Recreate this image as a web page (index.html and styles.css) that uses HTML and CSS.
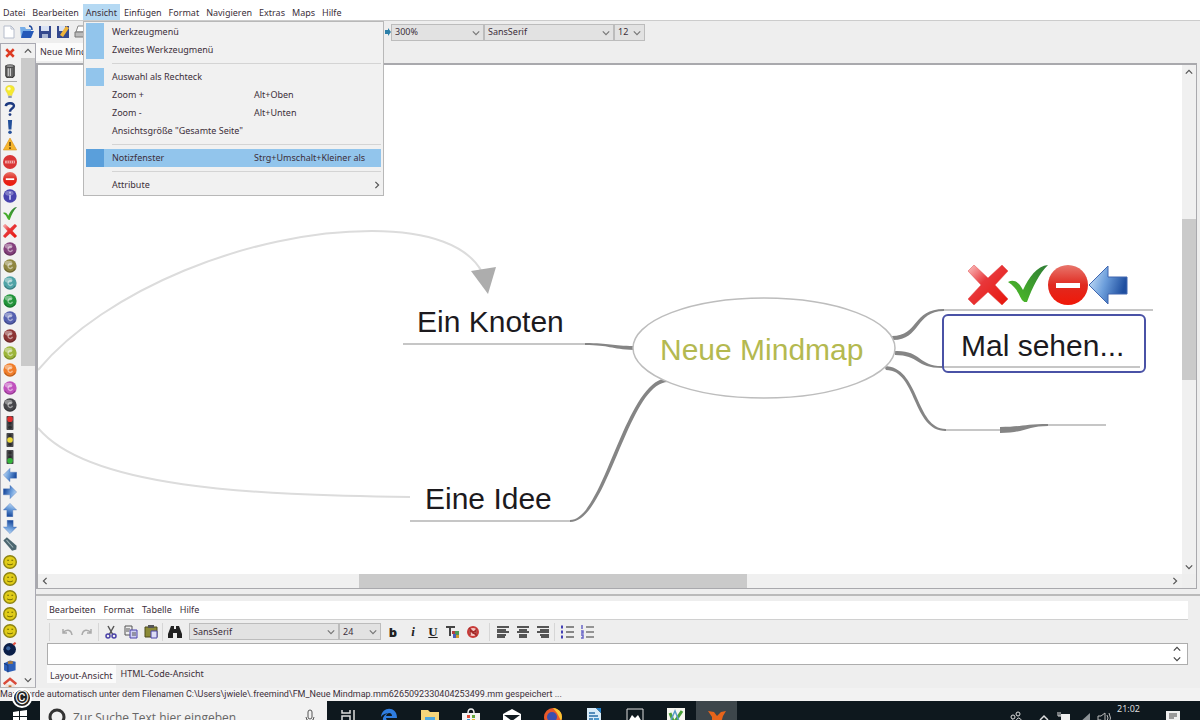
FILE: index.html
```html
<!DOCTYPE html>
<html lang="de">
<head>
    <meta charset="UTF-8">
    <meta name="viewport" content="width=device-width, initial-scale=1.0">
    <title>FreeMind - Neue Mindmap</title>
    <link rel="stylesheet" href="styles.css">
</head>
<body>
    <!-- shared icon symbols -->
    <svg class="sprite" width="0" height="0" aria-hidden="true">
        <defs>
            <linearGradient id="redFade" x1="0" y1="0" x2="1" y2="1">
                <stop offset="0" stop-color="#fbc4c4"/>
                <stop offset="0.4" stop-color="#e8373a"/>
                <stop offset="1" stop-color="#e8150a"/>
            </linearGradient>
            <linearGradient id="redBall" x1="0" y1="0" x2="0" y2="1">
                <stop offset="0" stop-color="#e8766c"/>
                <stop offset="0.5" stop-color="#e02a20"/>
                <stop offset="1" stop-color="#f01808"/>
            </linearGradient>
            <linearGradient id="greenFade" x1="1" y1="0" x2="0" y2="1">
                <stop offset="0" stop-color="#2f7d36"/>
                <stop offset="1" stop-color="#4fc026"/>
            </linearGradient>
            <linearGradient id="blueFade" x1="0" y1="0" x2="1" y2="0.3">
                <stop offset="0" stop-color="#d3e8fa"/>
                <stop offset="0.5" stop-color="#6d9fdc"/>
                <stop offset="1" stop-color="#1f4fa0"/>
            </linearGradient>
            <symbol id="cross" viewBox="0 0 40 40">
                <path d="M6 0 20 13 34 0 40 6 27 20 40 34 34 40 20 27 6 40 0 34 13 20 0 6Z" fill="url(#redFade)" stroke="#e04848" stroke-width="0.5"/>
            </symbol>
            <symbol id="cross-plain" viewBox="0 0 40 40">
                <path d="M5 5 35 35M35 5 5 35" stroke="#dd3a22" stroke-width="10"/>
            </symbol>
            <symbol id="check" viewBox="0 0 40 40">
                <path d="M0 17C6 14 11 17 15 25C21 12 29 1 40 0C31 9 25 21 19 37C11 38 14 26 0 17Z" fill="url(#greenFade)"/>
            </symbol>
            <symbol id="noentry" viewBox="0 0 40 40">
                <circle cx="20" cy="20" r="20" fill="url(#redBall)"/>
                <rect x="8" y="18" width="24" height="5" fill="#fff"/>
            </symbol>
            <symbol id="arrow" viewBox="0 0 40 40">
                <path d="M1 20 20 1V12H39V29H20V39Z" fill="url(#blueFade)" stroke="#4067b0"/>
            </symbol>
            <symbol id="stop" viewBox="0 0 40 40">
                <circle cx="20" cy="20" r="20" fill="#d93535"/>
                <path d="M6 16h28v8H6z" fill="#f3b2b2"/>
                <path d="M12 16v8M18 16v8M24 16v8M30 16v8" stroke="#d93535" stroke-width="2"/>
            </symbol>
            <symbol id="ball" viewBox="0 0 40 40">
                <circle cx="20" cy="20" r="19" fill="currentColor"/>
                <ellipse cx="16" cy="12" rx="11" ry="7" fill="#fff" opacity="0.4"/>
                <path d="M25 15C18 11 13 17 15 23C18 29 25 28 27 22" fill="none" stroke="#fff" stroke-width="4" opacity="0.5"/>
                <path d="M5 28C12 40 28 40 35 28" fill="none" stroke="#000" stroke-width="3" opacity="0.25"/>
            </symbol>
            <symbol id="info" viewBox="0 0 40 40">
                <circle cx="20" cy="20" r="19" fill="#4843ae"/>
                <ellipse cx="18" cy="12" rx="12" ry="7" fill="#fff" opacity="0.3"/>
                <path d="M20 8v5M20 17v14" stroke="#c5c5f4" stroke-width="5"/>
            </symbol>
            <symbol id="smile" viewBox="0 0 40 40">
                <circle cx="20" cy="20" r="18" fill="#e0cc18" stroke="#8e8412" stroke-width="4"/>
                <path d="M12 15h5M24 15h5M12 25C16 29 24 29 28 25" fill="none" stroke="#6e6500" stroke-width="3"/>
            </symbol>
            <symbol id="bulb" viewBox="0 0 40 40">
                <path d="M20 1C8 1 4 12 10 20C13 24 14 26 14 30H26C26 26 27 24 30 20C36 12 32 1 20 1Z" fill="#f5e930" stroke="#d8c840"/>
                <circle cx="17" cy="11" r="5" fill="#fffbd0"/>
                <path d="M15 31h10v6H15z" fill="#8e98b0"/>
            </symbol>
            <symbol id="question" viewBox="0 0 40 40">
                <path d="M8 12C9 0 33 1 31 12C30 20 20 18 20 28" fill="none" stroke="#1d3a80" stroke-width="7"/>
                <circle cx="20" cy="36" r="4" fill="#1d3a80"/>
            </symbol>
            <symbol id="exclaim" viewBox="0 0 40 40">
                <path d="M14 0h12l-2 27h-8z" fill="#24509a"/>
                <circle cx="20" cy="35" r="5" fill="#24509a"/>
            </symbol>
            <symbol id="warning" viewBox="0 0 40 40">
                <path d="M20 3 39 37H1Z" fill="#f6b52c" stroke="#e09a22" stroke-width="2"/>
                <path d="M20 14v12M20 29v5" stroke="#705010" stroke-width="5"/>
            </symbol>
            <symbol id="trash" viewBox="0 0 40 40">
                <path d="M8 6h24v28l-5 5H12l-4-5z" fill="#666" stroke="#333" stroke-width="3"/>
                <path d="M15 12v22M21 12v22" stroke="#ddd" stroke-width="3"/>
                <ellipse cx="20" cy="6" rx="12" ry="4" fill="#999" stroke="#333" stroke-width="2"/>
            </symbol>
            <symbol id="light" viewBox="0 0 40 40">
                <rect x="10" y="0" width="20" height="40" rx="2" fill="#48484c"/>
                <circle cx="20" cy="8" r="5" fill="#2c2c2e"/>
                <circle cx="20" cy="20" r="5" fill="#2c2c2e"/>
                <circle cx="20" cy="32" r="5" fill="#2c2c2e"/>
            </symbol>
            <symbol id="pen" viewBox="0 0 40 40">
                <path d="M1 10 11 1 39 25 38 36 26 39Z" fill="#4c6670"/>
                <path d="M10 9 29 30" stroke="#9fb4b8" stroke-width="3"/>
            </symbol>
            <symbol id="bomb" viewBox="0 0 40 40">
                <circle cx="19" cy="21" r="18" fill="#0b1f48"/>
                <circle cx="15" cy="18" r="6" fill="#37619c"/>
                <path d="M29 8 36 2" stroke="#e25040" stroke-width="6"/>
            </symbol>
            <symbol id="folder" viewBox="0 0 40 40">
                <path d="M3 12 20 4 36 8V32L14 38 3 32Z" fill="#2d5fb8"/>
                <path d="M14 6h14v8H14z" fill="#a8793e"/>
                <path d="M3 12 14 18V38" fill="none" stroke="#193b7d" stroke-width="3"/>
            </symbol>
            <symbol id="house" viewBox="0 0 40 40">
                <path d="M7 20v18h26V20" fill="#f3e2d8"/>
                <path d="M2 20 20 5 38 20" fill="none" stroke="#d94b3a" stroke-width="7"/>
                <path d="M16 24h8v14h-8z" fill="#c06c30"/>
            </symbol>
            <symbol id="chevron" viewBox="0 0 10 10">
                <path d="M1 3 5 7 9 3" fill="none" stroke="currentColor" stroke-width="1.5"/>
            </symbol>
        </defs>
    </svg>

    <nav class="menubar">
        <button>Datei</button>
        <button>Bearbeiten</button>
        <button class="open">Ansicht</button>
        <button>Einfügen</button>
        <button>Format</button>
        <button>Navigieren</button>
        <button>Extras</button>
        <button>Maps</button>
        <button>Hilfe</button>

        <div class="dropdown">
            <button class="item checked">Werkzeugmenü</button>
            <button class="item checked">Zweites Werkzeugmenü</button>
            <hr>
            <button class="item checked">Auswahl als Rechteck</button>
            <button class="item">Zoom +<span class="shortcut">Alt+Oben</span></button>
            <button class="item">Zoom -<span class="shortcut">Alt+Unten</span></button>
            <button class="item">Ansichtsgröße "Gesamte Seite"</button>
            <hr>
            <button class="item checked active">Notizfenster<span class="shortcut">Strg+Umschalt+Kleiner als</span></button>
            <hr>
            <button class="item">Attribute<svg class="submenu" width="8" height="8"><use href="#chevron"/></svg></button>
        </div>
    </nav>

    <div class="toolbar">
        <div class="tools">
            <button aria-label="Neu"><svg viewBox="0 0 14 14"><path d="M2 1h7l3 3v9H2z" fill="#fff" stroke="#b5bccb"/><path d="M9 1v3h3" fill="none" stroke="#b5bccb"/></svg></button>
            <button aria-label="Öffnen"><svg viewBox="0 0 14 14"><path d="M0 2h5l1 2h5v8H1z" fill="#77aee8"/><path d="M3 6h11l-3 7H1z" fill="#2559b8"/><path d="M9 1q3 0 3 4" fill="none" stroke="#1d479b" stroke-width="1.5"/></svg></button>
            <button aria-label="Speichern"><svg viewBox="0 0 14 14"><path d="M1 1h12v12H1z" fill="#34498e"/><path d="M3 1h8v5H3z" fill="#d9e2f4"/><path d="M4 9h6v4H4z" fill="#a9b6d4"/></svg></button>
            <button aria-label="Speichern unter"><svg viewBox="0 0 14 14"><path d="M1 1h12v12H1z" fill="#34498e"/><path d="M3 1h6v5H3z" fill="#d9e2f4"/><path d="M4 10 10 1l3 2-6 9z" fill="#efb43a"/></svg></button>
            <button aria-label="Drucken"><svg viewBox="0 0 14 14"><path d="M4 1h8L9 7H2z" fill="#fff" stroke="#888"/><path d="M1 7h12v5H1z" fill="#bbb" stroke="#777"/></svg></button>
        </div>
        <svg class="next" width="6" height="8" viewBox="0 0 6 8"><path d="M0 2h3V0l3 4-3 4V6H0z" fill="#2c7fa8"/></svg>
        <label class="combo zoom"><select aria-label="Zoom"><option>300%</option></select><svg><use href="#chevron"/></svg></label>
        <label class="combo font"><select aria-label="Schriftart"><option>SansSerif</option></select><svg><use href="#chevron"/></svg></label>
        <label class="combo size"><select aria-label="Schriftgröße"><option>12</option></select><svg><use href="#chevron"/></svg></label>
    </div>

    <div class="workspace">
        <aside class="iconbar">
            <div class="icons">
                <button aria-label="Icon entfernen"><svg class="small"><use href="#cross-plain"/></svg></button>
                <button aria-label="Alle entfernen"><svg><use href="#trash"/></svg></button>
                <hr>
                <div class="icon-list">
                    <button aria-label="Idee"><svg><use href="#bulb"/></svg></button>
                    <button aria-label="Frage"><svg><use href="#question"/></svg></button>
                    <button aria-label="Wichtig"><svg><use href="#exclaim"/></svg></button>
                    <button aria-label="Warnung"><svg><use href="#warning"/></svg></button>
                    <button aria-label="Stop"><svg><use href="#stop"/></svg></button>
                    <button aria-label="Verboten"><svg><use href="#noentry"/></svg></button>
                    <button aria-label="Info"><svg><use href="#info"/></svg></button>
                    <button aria-label="OK"><svg><use href="#check"/></svg></button>
                    <button aria-label="Nicht OK"><svg><use href="#cross"/></svg></button>
                    <button aria-label="Priorität 1" class="purple"><svg><use href="#ball"/></svg></button>
                    <button aria-label="Priorität 2" class="olive"><svg><use href="#ball"/></svg></button>
                    <button aria-label="Priorität 3" class="teal"><svg><use href="#ball"/></svg></button>
                    <button aria-label="Priorität 4" class="green"><svg><use href="#ball"/></svg></button>
                    <button aria-label="Priorität 5" class="blue"><svg><use href="#ball"/></svg></button>
                    <button aria-label="Priorität 6" class="brown"><svg><use href="#ball"/></svg></button>
                    <button aria-label="Priorität 7" class="lime"><svg><use href="#ball"/></svg></button>
                    <button aria-label="Priorität 8" class="orange"><svg><use href="#ball"/></svg></button>
                    <button aria-label="Priorität 9" class="pink"><svg><use href="#ball"/></svg></button>
                    <button aria-label="Priorität 0" class="dark"><svg><use href="#ball"/></svg></button>
                    <button aria-label="Ampel rot"><svg viewBox="0 0 40 40"><use href="#light"/><circle cx="20" cy="9" r="8" fill="#e33030"/></svg></button>
                    <button aria-label="Ampel gelb"><svg viewBox="0 0 40 40"><use href="#light"/><circle cx="20" cy="20" r="8" fill="#ecd83a"/></svg></button>
                    <button aria-label="Ampel grün"><svg viewBox="0 0 40 40"><use href="#light"/><circle cx="20" cy="31" r="8" fill="#35b43c"/></svg></button>
                    <button aria-label="Zurück"><svg><use href="#arrow"/></svg></button>
                    <button aria-label="Vor"><svg class="turn-right"><use href="#arrow"/></svg></button>
                    <button aria-label="Hoch"><svg class="turn-up"><use href="#arrow"/></svg></button>
                    <button aria-label="Runter"><svg class="turn-down"><use href="#arrow"/></svg></button>
                    <button aria-label="Stift"><svg><use href="#pen"/></svg></button>
                    <button aria-label="Smiley 1"><svg><use href="#smile"/></svg></button>
                    <button aria-label="Smiley 2"><svg><use href="#smile"/></svg></button>
                    <button aria-label="Smiley 3"><svg><use href="#smile"/></svg></button>
                    <button aria-label="Smiley 4"><svg><use href="#smile"/></svg></button>
                    <button aria-label="Smiley 5"><svg><use href="#smile"/></svg></button>
                    <button aria-label="Bombe"><svg><use href="#bomb"/></svg></button>
                    <button aria-label="Ordner"><svg><use href="#folder"/></svg></button>
                    <button aria-label="Haus"><svg><use href="#house"/></svg></button>
                </div>
            </div>
            <div class="scroll vertical side-scroll">
                <svg class="turn-up-chevron"><use href="#chevron"/></svg>
                <div class="thumb"></div>
                <div class="rest"></div>
                <svg><use href="#chevron"/></svg>
            </div>
        </aside>

        <div class="content">
            <div class="maptabs"><button>Neue Mindmap</button></div>

            <main class="mapframe">
                <div class="map">
                    <svg class="edges" width="1144" height="508" viewBox="38 65 1144 508">
                        <g fill="none" stroke="#dcdcdc" stroke-width="2">
                            <path d="M410 497C250 495 88 488 38 428"/>
                            <path d="M38 370C105 290 250 231 372 231C430 231 468 246 482 272"/>
                        </g>
                        <path d="M471 271 496 267 488 294Z" fill="#adadad"/>
                        <g fill="none" stroke="#c6c6c6" stroke-width="2">
                            <path d="M403 344H585M410 521H570M944 310H1153M942 367H1140M944 430H1000M1046 425H1106"/>
                        </g>
                        <g fill="#858585">
                            <path d="M585 343C610 343 612 346 634 346V350C610 349 610 345 585 345Z"/>
                            <path d="M570 520C604 520 625 379 668 378V382C628 383 608 522 570 522Z"/>
                            <path d="M892 336C919 336 912 309 944 309V311C915 311 921 340 893 340Z"/>
                            <path d="M895 351C921 350 918 366 942 366V368C916 368 919 355 895 355Z"/>
                            <path d="M884 366C920 366 915 429 946 429V431C912 431 917 370 886 370Z"/>
                            <path d="M1000 427C1021 427 1024 424 1048 424V426C1028 426 1024 433 1000 433Z"/>
                        </g>
                        <ellipse cx="764" cy="348" rx="131" ry="50" fill="#fff" stroke="#bdbdbd" stroke-width="1.5"/>
                    </svg>
                    <div class="node knoten">Ein Knoten</div>
                    <div class="node idee">Eine Idee</div>
                    <div class="node root">Neue Mindmap</div>
                    <div class="node marks">
                        <svg><use href="#cross"/></svg>
                        <svg><use href="#check"/></svg>
                        <svg><use href="#noentry"/></svg>
                        <svg><use href="#arrow"/></svg>
                    </div>
                    <div class="node selected">Mal sehen...</div>
                </div>
                <div class="scroll vertical map-v">
                    <svg class="turn-up-chevron"><use href="#chevron"/></svg>
                    <div class="before"></div>
                    <div class="thumb"></div>
                    <div class="rest"></div>
                    <svg><use href="#chevron"/></svg>
                </div>
                <div class="scroll horizontal map-h">
                    <svg class="turn-left-chevron"><use href="#chevron"/></svg>
                    <div class="before"></div>
                    <div class="thumb"></div>
                    <div class="rest"></div>
                    <svg class="turn-right-chevron"><use href="#chevron"/></svg>
                </div>
            </main>

            <section class="notes">
                <div class="notes-menu">
                    <button>Bearbeiten</button>
                    <button>Format</button>
                    <button>Tabelle</button>
                    <button>Hilfe</button>
                </div>
                <div class="notes-tools">
                    <div class="group first">
                        <button aria-label="Rückgängig"><svg viewBox="0 0 14 14"><path d="M3 4v4h4M3 8C6 4 11 4 12 10" fill="none" stroke="#aaa" stroke-width="1.5"/></svg></button>
                        <button aria-label="Wiederholen"><svg viewBox="0 0 14 14"><path d="M11 4v4H7M11 8C8 4 3 4 2 10" fill="none" stroke="#aaa" stroke-width="1.5"/></svg></button>
                    </div>
                    <div class="group">
                        <button aria-label="Ausschneiden"><svg viewBox="0 0 14 14"><path d="M4 1 9 10M10 1 5 10" stroke="#555" stroke-width="1.5"/><circle cx="4" cy="11" r="2" fill="none" stroke="#4a42a8" stroke-width="1.5"/><circle cx="10" cy="11" r="2" fill="none" stroke="#4a42a8" stroke-width="1.5"/></svg></button>
                        <button aria-label="Kopieren"><svg viewBox="0 0 14 14"><path d="M1 1h7v9H1z" fill="#eee" stroke="#555"/><path d="M6 5h7v8H6z" fill="#cfcff2" stroke="#4a42a8"/><path d="M2 4h4M2 6h3M8 8h4M8 10h4" stroke="#555"/></svg></button>
                        <button aria-label="Einfügen"><svg viewBox="0 0 14 14"><path d="M1 2h12v10H1z" fill="#8b8a35" stroke="#4c4b1c"/><path d="M4 0h6v3H4z" fill="#555"/><path d="M7 6h6v7H7z" fill="#dcdcf5" stroke="#4a42a8"/></svg></button>
                    </div>
                    <div class="group last">
                        <button aria-label="Suchen"><svg viewBox="0 0 14 14"><path d="M3 1h3v3h2V1h3l3 8v4H9V8H5v5H0V9z" fill="#222"/></svg></button>
                    </div>
                    <label class="combo note-font"><select aria-label="Notiz-Schriftart"><option>SansSerif</option></select><svg><use href="#chevron"/></svg></label>
                    <label class="combo note-size"><select aria-label="Notiz-Schriftgröße"><option>24</option></select><svg><use href="#chevron"/></svg></label>
                    <div class="group format">
                        <button class="bold">b</button>
                        <button class="italic">i</button>
                        <button class="underline">U</button>
                        <button aria-label="Textfarbe"><svg viewBox="0 0 14 14"><path d="M0 2h9M4 2v9" stroke="#444" stroke-width="2"/><path d="M6 6h3v3H6z" fill="#b34040"/><path d="M9 6h4v4H9z" fill="#4b9a58"/><path d="M7 9h3v4H7z" fill="#4a5db8"/><path d="M10 10h3v3h-3z" fill="#d39a2c"/></svg></button>
                        <button aria-label="Format löschen"><svg viewBox="0 0 14 14"><circle cx="7" cy="7" r="5" fill="#f3c6c3" stroke="#c93a38" stroke-width="2"/><path d="M4 10V5l3 3 3-3v5M3 3l8 8" fill="none" stroke="#a52a28" stroke-width="1.5"/></svg></button>
                    </div>
                    <div class="group align">
                        <button aria-label="Linksbündig"><svg viewBox="0 0 14 14"><path d="M1 2h12M1 5h9M1 7h12M1 10h9M1 12h8" stroke="#555" stroke-width="2"/></svg></button>
                        <button aria-label="Zentriert"><svg viewBox="0 0 14 14"><path d="M1 2h12M3 5h8M1 7h12M3 10h8M3 12h8" stroke="#555" stroke-width="2"/></svg></button>
                        <button aria-label="Rechtsbündig"><svg viewBox="0 0 14 14"><path d="M1 2h12M4 5h9M1 7h12M4 10h9M5 12h8" stroke="#555" stroke-width="2"/></svg></button>
                    </div>
                    <div class="group last">
                        <button aria-label="Liste"><svg viewBox="0 0 14 14"><path d="M1 2h2M1 7h2M1 12h2" stroke="#4440b5" stroke-width="3"/><path d="M6 2h8M6 7h8M6 12h8" stroke="#666" stroke-width="1.5"/></svg></button>
                        <button aria-label="Nummerierte Liste"><svg viewBox="0 0 14 14"><path d="M2 0v4M1 6h2v2H1M1 10h2v3H1" fill="none" stroke="#6a66c8" stroke-width="1.5"/><path d="M6 2h8M6 7h8M6 12h8" stroke="#777" stroke-width="1.5"/></svg></button>
                    </div>
                </div>
                <div class="editor">
                    <textarea aria-label="Notiz"></textarea>
                    <div class="spin">
                        <svg class="turn-up-chevron"><use href="#chevron"/></svg>
                        <svg><use href="#chevron"/></svg>
                    </div>
                </div>
                <div class="notes-tabs">
                    <button class="current">Layout-Ansicht</button>
                    <button>HTML-Code-Ansicht</button>
                </div>
            </section>
        </div>
    </div>

    <div class="status">Map wurde automatisch unter dem Filenamen C:\Users\jwiele\.freemind\FM_Neue Mindmap.mm6265092330404253499.mm gespeichert ...
        <span class="copyright">©</span>
    </div>

    <footer class="taskbar">
        <button class="start" aria-label="Start"><svg width="14" height="14" viewBox="0 0 14 14"><path d="M0 2 6 1v5H0zM7 1l7-1v6H7zM0 7h6v6l-6-1zM7 7h7v7l-7-1z" fill="#fff"/></svg></button>
        <label class="search">
            <svg width="18" height="18" viewBox="0 0 18 18"><circle cx="9" cy="9" r="7" fill="none" stroke="#333" stroke-width="3"/></svg>
            <input type="text" placeholder="Zur Suche Text hier eingeben">
            <svg width="10" height="16" viewBox="0 0 10 16"><rect x="3" y="1" width="4" height="9" rx="2" fill="none" stroke="#555"/><path d="M1 8q0 4 4 4t4-4M5 12v3" fill="none" stroke="#555"/></svg>
        </label>
        <div class="apps">
            <button aria-label="Taskansicht"><svg viewBox="0 0 18 18"><path d="M3 2v3h8V2M3 8h8v6H3zM15 2v13" fill="none" stroke="#ddd" stroke-width="1.5"/></svg></button>
            <button aria-label="Edge"><svg viewBox="0 0 18 18"><path d="M1 9C2 -2 17 -2 17 10H6C7 15 12 15 16 13V16C8 20 2 16 3 10C4 7 7 5 9 5C6 5 3 6 1 9ZM6 8H12C12 4 7 4 6 8Z" fill="#2f7de0"/></svg></button>
            <button aria-label="Explorer"><svg viewBox="0 0 18 18"><path d="M0 2h7l2 2h9v13H0z" fill="#f6d67a"/><path d="M4 9h10v8H4z" fill="#4fa9e0"/></svg></button>
            <button aria-label="Store"><svg viewBox="0 0 18 18"><path d="M6 5q0-4 3-4t3 4" fill="none" stroke="#eee" stroke-width="1.5"/><path d="M0 5h18v12H0z" fill="#f4f4f4"/><path d="M5 7h3v3H5z" fill="#e04a35"/><path d="M10 7h3v3h-3z" fill="#62a83a"/><path d="M5 11h3v3H5z" fill="#3b92d8"/><path d="M10 11h3v3h-3z" fill="#e8b52e"/></svg></button>
            <button aria-label="Mail"><svg viewBox="0 0 18 18"><path d="M0 6 9 1l9 5v11H0z" fill="#fff"/><path d="M1 7h16l-8 6z" fill="#121c22"/></svg></button>
            <button aria-label="Firefox"><svg viewBox="0 0 18 18"><circle cx="9" cy="9" r="9" fill="#e8592a"/><path d="M9 0a9 9 0 0 1 8 13Q14 5 9 0" fill="#f8c532"/><circle cx="8" cy="9" r="5" fill="#3a4fae"/></svg></button>
            <button aria-label="Writer"><svg viewBox="0 0 18 18"><path d="M2 0h9l5 5v13H2z" fill="#d9ebf8"/><path d="M11 0h5v5z" fill="#2580c8"/><path d="M4 5h6M4 8h9M4 11h4" stroke="#2a6fa8" stroke-width="1.5"/><path d="M9 10h5v4H9z" fill="#4c98cf"/></svg></button>
            <button aria-label="Fotos"><svg viewBox="0 0 18 18"><path d="M1 1h16v16H1z" fill="none" stroke="#ddd"/><path d="M2 14 6 7l3 3 3-3 4 7z" fill="#fff"/></svg></button>
            <button aria-label="Notizen"><svg viewBox="0 0 18 18"><path d="M0 0h18v18H0z" fill="#f6f6f0"/><path d="M3 5 7 15 15 3" fill="none" stroke="#4aa03a" stroke-width="3"/><path d="M4 12 8 3l4 10" fill="none" stroke="#5a9ac8" stroke-width="1.5"/></svg></button>
            <button aria-label="FreeMind" class="running"><svg viewBox="0 0 18 18"><path d="M0 3 6 4 9 8 13 4 18 3 15 8 13 15 9 12 4 15 4 9Z" fill="#e8641a"/></svg></button>
        </div>
        <div class="tray">
            <svg class="people" viewBox="0 0 14 14"><circle cx="9" cy="4" r="2" fill="none" stroke="#ddd"/><circle cx="4" cy="7" r="2" fill="none" stroke="#ddd"/><path d="M6 13q3-9 7-2M1 13q2-6 5 0" fill="none" stroke="#ddd"/></svg>
            <svg viewBox="0 0 14 14"><path d="M3 10 7 6l4 4" fill="none" stroke="#ddd" stroke-width="1.5"/></svg>
            <svg viewBox="0 0 14 14"><path d="M4 4h9v7H4z" fill="#eee"/><path d="M1 2v4h4M3 2v4" fill="none" stroke="#ddd"/></svg>
            <svg viewBox="0 0 14 14"><path d="M2 13 13 3v10z" fill="#8c9296"/></svg>
            <svg viewBox="0 0 14 14"><path d="M1 6h3l4-3v10L4 10H1zM10 5q2 3 0 6M12 3q3 5 0 10" fill="none" stroke="#bbb"/></svg>
            <time>21:02</time>
            <svg viewBox="0 0 14 14"><path d="M0 1h14v10H9l-2 3-2-3H0z" fill="#eee"/><path d="M3 4h8M3 6h8M3 8h5" stroke="#444"/></svg>
        </div>
    </footer>
</body>
</html>
```
FILE: styles.css
```css
* {
    box-sizing: border-box;
}
body {
    display: flex;
    flex-direction: column;
    height: 100vh;
    margin: 0;
    overflow: hidden;
    background-color: #eeeeee;
    color: #3c2f3a;
    font-family: "Noto Sans", "Open Sans", sans-serif;
    font-size: 9px;
    line-height: 12px;
}
button {
    padding: 0;
    border: none;
    background: none;
    color: inherit;
    font: inherit;
    white-space: nowrap;
}
hr {
    margin: 0;
    border: none;
}
svg {
    display: block;
    flex-shrink: 0;
}
.sprite {
    position: absolute;
}

/* menu bar */
.menubar {
    position: relative;
    z-index: 5;
    display: flex;
    flex: 0 0 21px;
    padding-top: 4px;
    background-color: #ffffff;
    border-bottom: 1px solid #cccccc;
}
.menubar > button {
    padding: 1px 3px 0;
    margin-right: 1px;
}
.menubar > .open {
    background-color: #b5d9f3;
}
.dropdown {
    position: absolute;
    top: 21px;
    left: 83px;
    display: flex;
    flex-direction: column;
    width: 301px;
    padding: 1px 2px;
    background-color: #f1f1f1;
    border: 1px solid #b8b8b8;
}
.item {
    position: relative;
    display: flex;
    align-items: center;
    height: 18px;
    padding-left: 26px;
    text-align: left;
}
.dropdown hr {
    height: 1px;
    margin: 4px 0 4px 26px;
    background-color: #d4d4d4;
}
.checked {
    background: linear-gradient(#92c5ec, #92c5ec) no-repeat 0 0 / 18px 100%;
}
.checked.active {
    background-color: #92c5ec;
    background-image: linear-gradient(#5a9fdb, #5a9fdb);
}
.shortcut {
    position: absolute;
    left: 168px;
}
.submenu {
    margin-left: auto;
    transform: rotate(-90deg);
    color: #555555;
}

/* toolbar */
.toolbar {
    display: flex;
    align-items: center;
    flex: 0 0 22px;
    background-color: #eeeeee;
}
.tools {
    display: flex;
    gap: 4px;
    flex: 0 0 385px;
    padding-left: 2px;
}
.tools svg,
.notes-tools svg {
    width: 14px;
    height: 14px;
}
.combo {
    position: relative;
    height: 17px;
}
.combo select {
    width: 100%;
    height: 100%;
    padding: 0 3px;
    appearance: none;
    background-color: #e2e2e2;
    border: 1px solid #bcbcbc;
    border-radius: 0;
    color: inherit;
    font: inherit;
}
.combo svg {
    position: absolute;
    top: 5px;
    right: 4px;
    width: 8px;
    height: 8px;
    color: #777777;
}
.zoom {
    width: 93px;
}
.font {
    width: 130px;
}
.size {
    width: 31px;
}

/* icon bar */
.workspace {
    display: flex;
    flex: 1;
    min-height: 0;
}
.iconbar {
    display: flex;
    flex: 0 0 36px;
    border: 1px solid #a9a9b2;
    border-bottom-color: #bbbbbb;
    overflow: hidden;
}
.icons {
    flex: 1;
    padding-right: 2px;
    background-color: #f2f2f2;
}
.icons button {
    display: flex;
    align-items: center;
    justify-content: center;
    width: 100%;
    height: 18px;
}
.icons svg {
    width: 14px;
    height: 14px;
}
.icons .small {
    width: 10px;
    height: 10px;
}
.icons hr {
    height: 1px;
    margin: 1px 2px;
    background-color: #aaaaaa;
}
.icon-list {
    display: grid;
    grid-auto-rows: 17px 18px 17px 18px 17px;
}
.purple { color: #84407c; }
.olive { color: #8f8640; }
.teal { color: #4fa3a6; }
.green { color: #22943a; }
.blue { color: #5560b0; }
.brown { color: #8c3434; }
.lime { color: #9cb53a; }
.orange { color: #f07d2a; }
.pink { color: #c050bd; }
.dark { color: #46464a; }
.turn-right { transform: rotate(180deg); }
.turn-up { transform: rotate(90deg); }
.turn-down { transform: rotate(-90deg); }

/* scroll bars */
.scroll {
    display: flex;
    align-items: center;
    background-color: #f0f0f0;
    color: #555555;
}
.scroll svg {
    width: 8px;
    height: 8px;
    margin: 3px;
}
.scroll .thumb {
    background-color: #cacaca;
}
.vertical {
    flex-direction: column;
    width: 14px;
}
.vertical .thumb {
    width: 100%;
}
.horizontal .thumb {
    height: 100%;
}
.turn-up-chevron { transform: rotate(180deg); }
.turn-left-chevron { transform: rotate(90deg); }
.turn-right-chevron { transform: rotate(-90deg); }
.side-scroll .thumb { flex: 50; }
.side-scroll .rest { flex: 50; }

/* mind map */
.content {
    display: flex;
    flex: 1;
    flex-direction: column;
    min-width: 0;
}
.maptabs {
    flex: 0 0 20px;
}
.maptabs button {
    height: 18px;
    padding: 0 4px;
    background-color: #fbfbfb;
}
.mapframe {
    display: grid;
    grid-template-columns: 1fr 14px;
    grid-template-rows: 1fr 14px;
    flex: 1;
    min-height: 0;
    margin-right: 3px;
    border: 2px solid #a9a9ad;
    border-width: 2px 1px 1px 2px;
}
.map {
    position: relative;
    overflow: hidden;
    background-color: #ffffff;
}
.map-v .before { flex: 140; }
.map-v .thumb { flex: 160; }
.map-v .rest { flex: 180; }
.map-h .before { flex: 307; }
.map-h .thumb { flex: 388; }
.map-h .rest { flex: 421; }
.node {
    position: absolute;
    color: #1c1a1e;
    font-family: "Liberation Sans", Arial, sans-serif;
    font-size: 30px;
    line-height: 34px;
    white-space: nowrap;
}
.knoten {
    left: 379px;
    top: 240px;
}
.idee {
    left: 387px;
    top: 417px;
}
.root {
    left: 622px;
    top: 268px;
    color: #b4b950;
}
.marks {
    display: flex;
    left: 930px;
    top: 200px;
}
.marks svg {
    width: 40px;
    height: 40px;
}
.selected {
    left: 904px;
    top: 249px;
    padding: 13px 20px 8px 17px;
    border: 2px solid #4a52a6;
    border-radius: 6px;
}

/* notes */
.notes {
    margin-top: 5px;
    padding: 5px 12px 4px 11px;
    border-top: 2px solid #bababa;
}
.notes-menu {
    display: flex;
    gap: 8px;
    height: 19px;
    padding-left: 2px;
    background-color: #ffffff;
    border-bottom: 1px solid #d0d0d0;
}
.notes-tools {
    display: flex;
    align-items: center;
    height: 23px;
}
.group {
    display: flex;
    gap: 6px;
    padding: 2px 4px 2px 5px;
    border-right: 1px solid #d6d6d6;
}
.group button {
    width: 14px;
    height: 14px;
}
.group.first {
    margin-left: 2px;
    padding-left: 10px;
    border-left: 1px solid #d6d6d6;
}
.group.last {
    border-right: none;
}
.note-font {
    width: 150px;
    margin-left: 3px;
}
.note-size {
    width: 42px;
}
.format button {
    color: #222222;
    font-size: 13px;
    font-weight: 700;
}
.format .bold {
    font-weight: 900;
}
.format .italic {
    font-family: "Liberation Serif", serif;
    font-style: italic;
}
.format .underline {
    font-family: "Liberation Serif", serif;
    text-decoration: underline;
}
.format {
    padding-right: 9px;
}
.align {
    padding-left: 6px;
}
.editor {
    display: flex;
    height: 22px;
    border: 1px solid #adadad;
    background-color: #ffffff;
}
.editor textarea {
    flex: 1;
    padding: 2px;
    border: none;
    outline: none;
    resize: none;
    font: inherit;
}
.spin {
    display: flex;
    flex-direction: column;
    justify-content: space-around;
    width: 14px;
    color: #444444;
}
.spin svg {
    width: 8px;
    height: 8px;
}
.notes-tabs {
    display: flex;
    gap: 2px;
    height: 19px;
}
.notes-tabs button {
    height: 18px;
    padding: 0 3px;
}
.notes-tabs .current {
    padding-top: 3px;
    background-color: #fbfbfb;
}

/* status line */
.status {
    position: relative;
    flex: 0 0 13px;
    background-color: #f2f2f2;
    font-family: Roboto, sans-serif;
    white-space: nowrap;
}
.copyright {
    position: absolute;
    left: 12px;
    top: 0;
    z-index: 2;
    width: 20px;
    height: 20px;
    border: 2px solid #ffffff;
    border-radius: 50%;
    background-color: #222222;
    color: #ffffff;
    font-size: 18px;
    line-height: 16px;
    text-align: center;
}

/* taskbar */
.taskbar {
    display: flex;
    flex: 0 0 19px;
    height: 19px;
    overflow: hidden;
    background-color: #0e181e;
}
.start,
.search,
.apps button {
    display: flex;
    align-items: center;
    height: 32px;
}
.start {
    justify-content: center;
    flex: 0 0 40px;
}
.search {
    flex: 0 0 287px;
    padding: 0 12px 0 8px;
    background-color: #f2f2f2;
}
.search input {
    flex: 1;
    min-width: 0;
    padding: 0 7px;
    border: none;
    background: none;
    font-family: "Open Sans", sans-serif;
    font-size: 12px;
}
.search input::placeholder {
    color: #666666;
}
.apps {
    display: flex;
    flex: 1;
}
.apps button {
    justify-content: center;
    width: 41px;
}
.apps svg {
    width: 18px;
    height: 18px;
}
.running {
    background-color: #3d464b;
}
.tray {
    display: flex;
    align-items: flex-start;
    gap: 6px;
    padding-right: 20px;
    color: #dddddd;
}
.tray svg {
    width: 14px;
    height: 14px;
    margin-top: 9px;
}
.tray .people {
    margin-right: 8px;
}
.tray time {
    margin: 2px 20px 0 0;
}
```
